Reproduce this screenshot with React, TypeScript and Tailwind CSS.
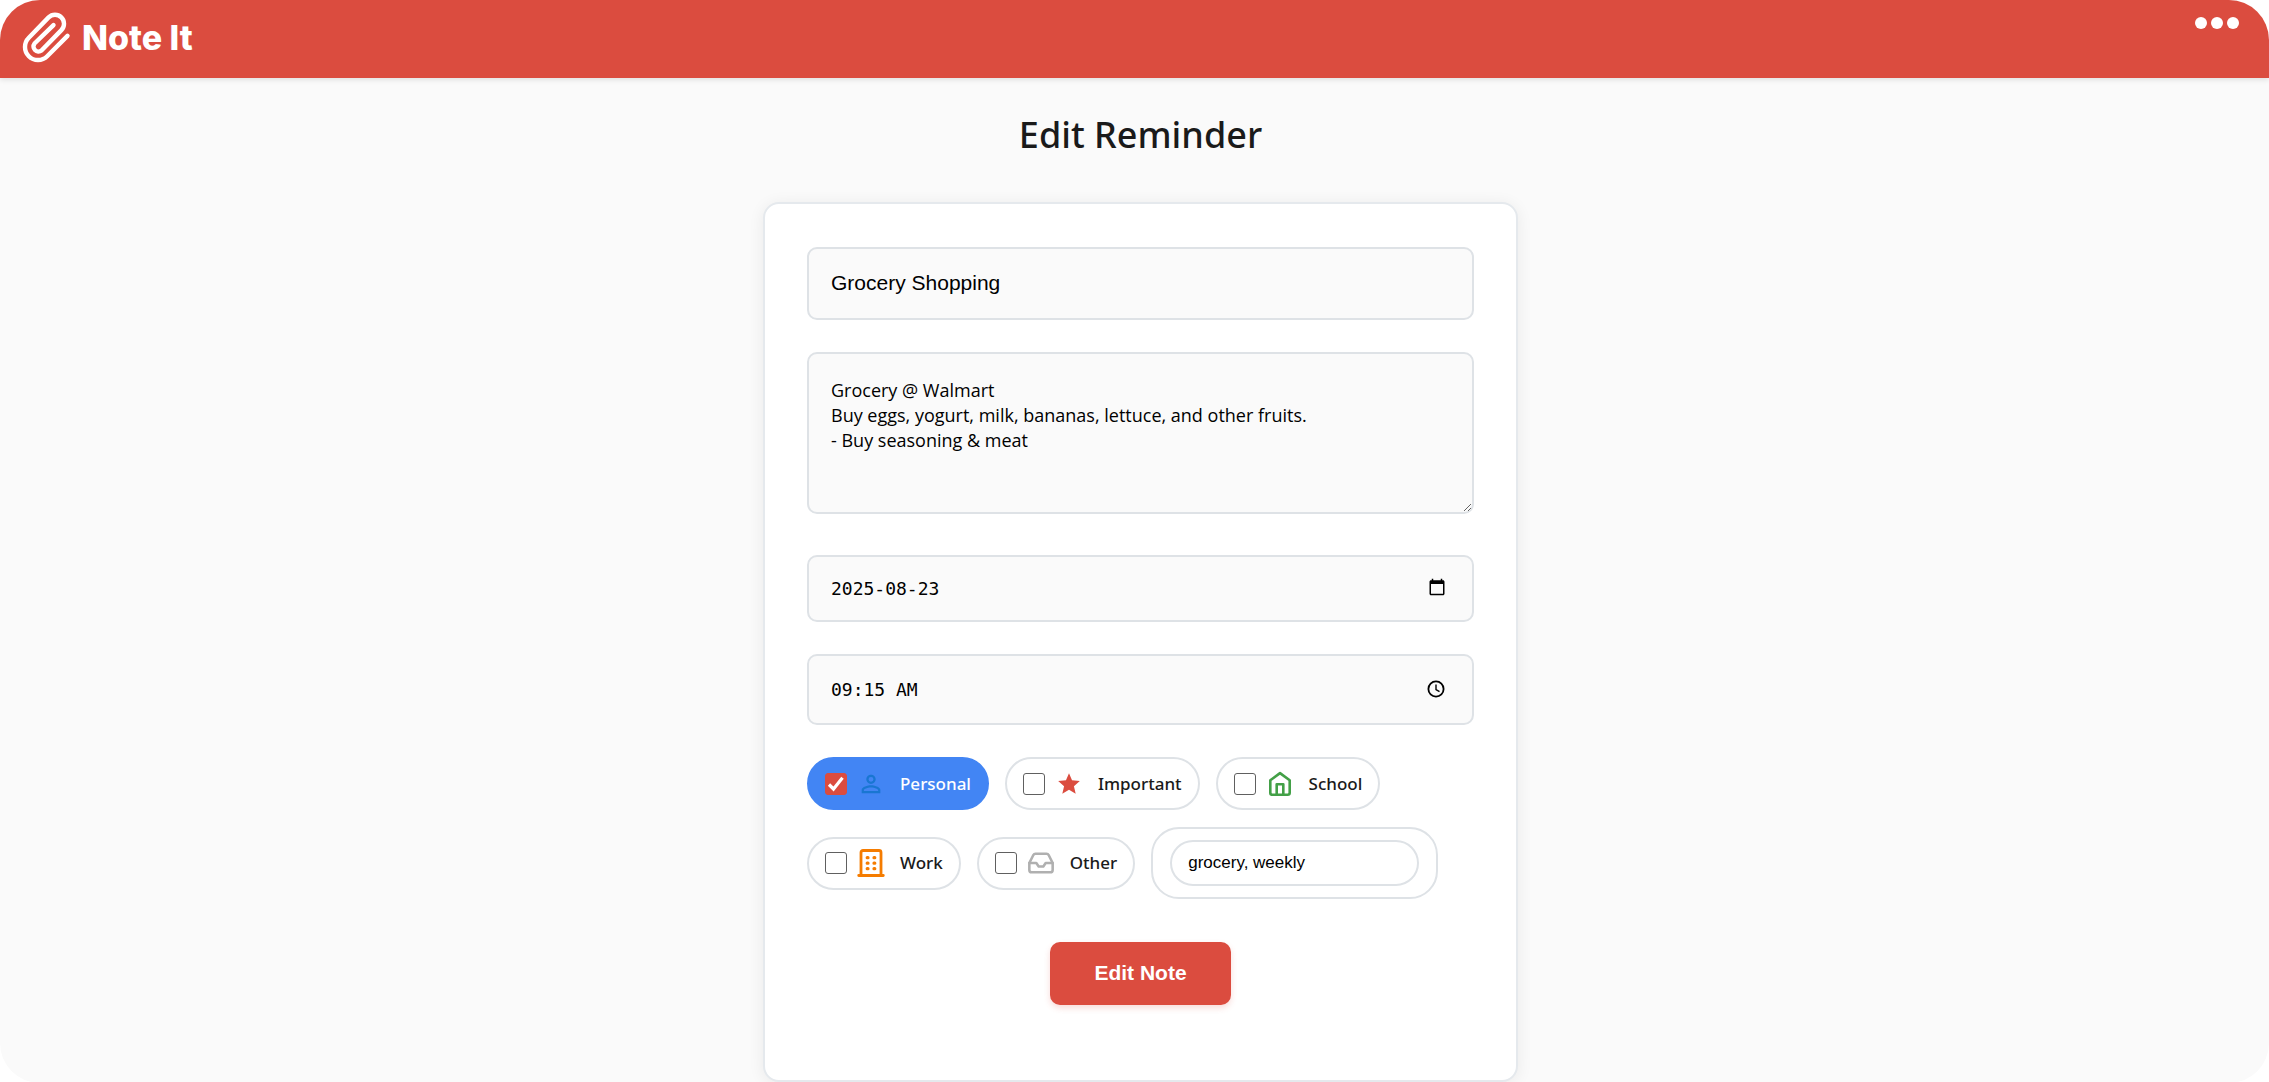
import { useState, type ReactNode } from "react";
import { Inbox } from "lucide-react";
import { MdPersonOutline, MdStar } from "react-icons/md";

const fieldClass =
  "block w-full rounded-[10px] border-2 border-[#dee2e6] bg-[#fafafa] px-[22px] text-black outline-none";

function PaperclipIcon() {
  return (
    <svg
      viewBox="22 12 50 51"
      className="h-[51px] w-[50px]"
      fill="none"
      stroke="currentColor"
      strokeWidth="4.4"
      strokeLinecap="round"
      strokeLinejoin="round"
      aria-hidden="true"
    >
      <path d="M67.5 35.9 47.2 56.2A13 13 0 0 1 28.8 37.8L48.6 17.4A9 9 0 0 1 61.4 30.1L41.5 50.5A5 5 0 0 1 34.5 43.5L53.5 25.1" />
    </svg>
  );
}

function HouseIcon() {
  return (
    <svg viewBox="0 0 28 28" className="size-7" fill="none" stroke="#43a047" strokeWidth="2.6" strokeLinejoin="round" aria-hidden="true">
      <path d="M4.3 10.3 14 3.1l9.7 7.2v12.5a2 2 0 0 1-2 2H6.3a2 2 0 0 1-2-2z" />
      <path d="M10.7 24.5V14.3h6.6v10.2" />
    </svg>
  );
}

function OfficeIcon() {
  return (
    <svg viewBox="0 0 28 28" className="size-7" fill="none" stroke="#f57c00" strokeWidth="2.8" strokeLinecap="round" aria-hidden="true">
      <path d="M4 26V3.5a2 2 0 0 1 2-2h16a2 2 0 0 1 2 2V26M1.7 26.5h24.6" />
      <path d="M10.2 8.7h.8M17 8.7h.8M10.2 14.2h.8M17 14.2h.8M10.2 19.7h.8M17 19.7h.8" strokeWidth="3.2" />
    </svg>
  );
}

function CalendarIcon() {
  return (
    <svg viewBox="0 0 24 24" className="size-[18px]" fill="currentColor" aria-hidden="true">
      <path d="M20 3h-1V1h-2v2H7V1H5v2H4c-1.1 0-2 .9-2 2v16c0 1.1.9 2 2 2h16c1.1 0 2-.9 2-2V5c0-1.1-.9-2-2-2zm0 18H4V8h16v13z" />
    </svg>
  );
}

function ClockIcon() {
  return (
    <svg viewBox="0 0 20 20" className="size-5" fill="none" stroke="currentColor" aria-hidden="true">
      <circle cx="10" cy="10" r="7.6" strokeWidth="1.8" />
      <path d="M10 5.5v5l3.5 2.2" strokeWidth="1.4" />
    </svg>
  );
}

type ChipProps = {
  label: string;
  icon: ReactNode;
  checked: boolean;
  onToggle: () => void;
};

function Chip({ label, icon, checked, onToggle }: ChipProps) {
  return (
    <label
      className={
        checked
          ? "flex h-[53px] cursor-pointer items-center rounded-full border-2 border-[#4285f4] bg-[#4285f4] px-4 text-white"
          : "flex h-[53px] cursor-pointer items-center rounded-full border-2 border-[#dee2e6] bg-white px-4 text-[#1a1a1a]"
      }
    >
      <span className="relative flex">
        <input
          type="checkbox"
          checked={checked}
          onChange={onToggle}
          className="size-[22px] appearance-none rounded-[3px] border border-[#606060] bg-white checked:border-[#db4c3f] checked:bg-[#db4c3f]"
        />
        {checked && (
          <svg
            viewBox="0 0 22 22"
            className="pointer-events-none absolute inset-0 size-[22px]"
            fill="none"
            stroke="white"
            strokeWidth="3.2"
            aria-hidden="true"
          >
            <path d="M4 11.5 8.5 16 17.5 4.8" />
          </svg>
        )}
      </span>
      <span className="ml-2.5 flex w-7 justify-center">{icon}</span>
      <span className="ml-[15px] font-['Noto_Sans',sans-serif] text-[17px] leading-6 font-medium">{label}</span>
    </label>
  );
}

const categories: { label: string; icon: ReactNode }[] = [
  { label: "Personal", icon: <MdPersonOutline size={28} color="#1976d2" /> },
  { label: "Important", icon: <MdStar size={26} color="#db4c3f" /> },
  { label: "School", icon: <HouseIcon /> },
  { label: "Work", icon: <OfficeIcon /> },
  { label: "Other", icon: <Inbox size={28} strokeWidth={2.2} color="#b0b0b0" /> },
];

export default function App() {
  const [selected, setSelected] = useState<string[]>(["Personal"]);

  const toggle = (label: string) =>
    setSelected((current) =>
      current.includes(label) ? current.filter((item) => item !== label) : [...current, label],
    );

  return (
    <div className="min-h-screen overflow-hidden rounded-[40px] bg-[#fafafa] font-['Noto_Sans',sans-serif]">
      <header className="flex h-[78px] items-start justify-between bg-[#db4c3f] text-white shadow-[0_2px_5px_rgba(0,0,0,0.1)]">
        <a href="#" className="flex items-center gap-2.5 pt-3 pl-[22px]">
          <PaperclipIcon />
          <span className="font-['Inter',sans-serif] text-[34px] leading-[51px] font-extrabold">Note It</span>
        </a>
        <button type="button" aria-label="Menu" className="mt-[17px] mr-[30px] flex gap-1">
          <span className="size-3 rounded-full bg-white" />
          <span className="size-3 rounded-full bg-white" />
          <span className="size-3 rounded-full bg-white" />
        </button>
      </header>

      <main className="flex flex-col items-center pb-px pl-3">
        <h1 className="mt-8 text-[36px] leading-[50px] font-medium text-[#1a1a1a]">Edit Reminder</h1>

        <form
          onSubmit={(event) => event.preventDefault()}
          className="mt-[42px] w-full max-w-[755px] rounded-2xl border-2 border-[#e5e9ed] bg-white px-[42px] pt-[43px] pb-[75px] shadow-[0_2px_16px_rgba(0,0,0,0.07)]"
        >
          <input
            type="text"
            aria-label="Title"
            defaultValue="Grocery Shopping"
            className={`${fieldClass} h-[73px] pb-0.5 font-['Liberation_Sans',sans-serif] text-[21px]`}
          />

          <textarea
            aria-label="Description"
            defaultValue={"Grocery @ Walmart\nBuy eggs, yogurt, milk, bananas, lettuce, and other fruits.\n- Buy seasoning & meat"}
            className={`${fieldClass} mt-8 h-[162px] resize py-6 font-['Open_Sans',sans-serif] text-lg leading-[25px]`}
          />

          <div className="relative mt-[41px]">
            <input
              type="text"
              aria-label="Date"
              defaultValue="2025-08-23"
              className={`${fieldClass} h-[67px] font-['DejaVu_Sans_Mono',monospace] text-lg`}
            />
            <button type="button" aria-label="Choose date" className="absolute inset-y-0 right-7 flex items-center pb-1 text-black">
              <CalendarIcon />
            </button>
          </div>

          <div className="relative mt-8">
            <input
              type="text"
              aria-label="Time"
              defaultValue="09:15 AM"
              className={`${fieldClass} h-[71px] font-['DejaVu_Sans_Mono',monospace] text-lg`}
            />
            <button type="button" aria-label="Choose time" className="absolute inset-y-0 right-7 flex items-center pb-0.5 text-black">
              <ClockIcon />
            </button>
          </div>

          <div className="mt-8 flex flex-wrap items-center gap-x-4 gap-y-[17px]">
            {categories.map(({ label, icon }) => (
              <Chip
                key={label}
                label={label}
                icon={icon}
                checked={selected.includes(label)}
                onToggle={() => toggle(label)}
              />
            ))}
            <div className="flex h-[72px] w-[287px] items-center rounded-[28px] border-2 border-[#dee2e6] px-[17px]">
              <input
                type="text"
                aria-label="Tags"
                defaultValue="grocery, weekly"
                className="h-[46px] w-full rounded-full border-2 border-[#dee2e6] bg-white px-4 font-['Liberation_Sans',sans-serif] text-[17px] text-black outline-none"
              />
            </div>
          </div>

          <div className="mt-[43px] flex justify-center">
            <button
              type="submit"
              className="h-[63px] w-[181px] rounded-[10px] bg-[#db4c3f] pb-0.5 font-['Liberation_Sans',sans-serif] text-[21px] font-bold text-white shadow-[0_3px_6px_rgba(219,76,63,0.2)]"
            >
              Edit Note
            </button>
          </div>
        </form>
      </main>
    </div>
  );
}
